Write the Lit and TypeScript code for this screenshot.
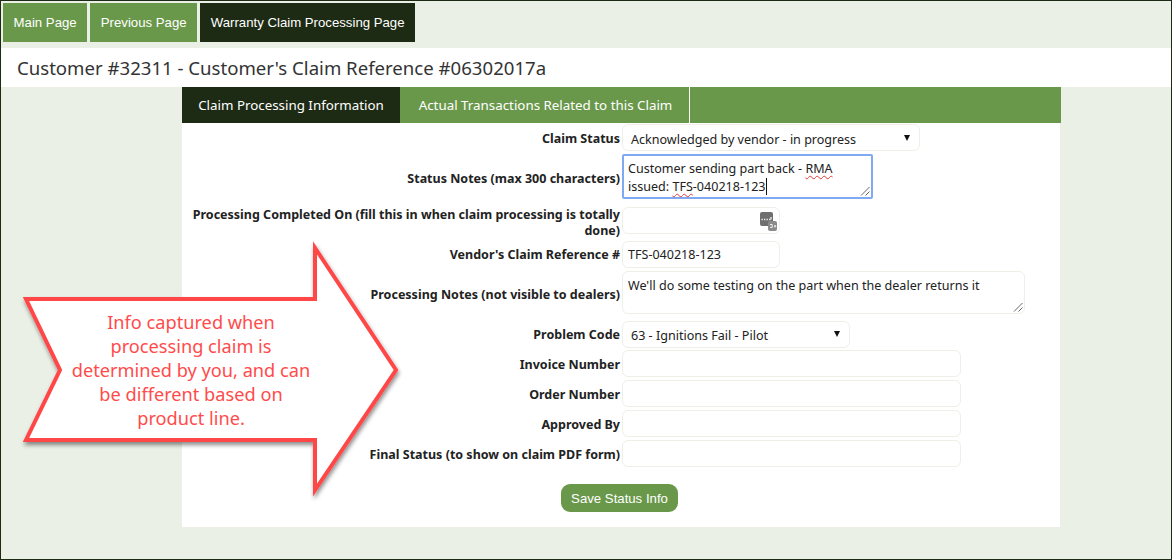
import { LitElement, html, css, svg } from "lit";
import { customElement } from "lit/decorators.js";

@customElement("app-root")
export class AppRoot extends LitElement {
  static styles = css`
    :host { display: block; width: 1172px; height: 560px; box-sizing: border-box; background: #eaf0e6; border: 1px solid #1e2b14; position: relative; overflow: hidden; font-family: "Noto Sans", "DejaVu Sans", sans-serif; color: #222; }
    .nav { display: flex; gap: 3px; padding: 2px 0 0 2px; height: 47px; box-sizing: border-box; }
    .nav a { display: flex; align-items: center; height: 39px; padding: 0 10.6px; background: #6a984b; color: #fff; font: 13.2px "Liberation Sans", Arial, sans-serif; }
    .nav a.on { background: #1e2b14; }
    .title { background: #fff; height: 39px; padding-left: 16px; display: flex; align-items: center; font-size: 18.6px; color: #333; }
    .panel { width: 879px; margin-left: 181px; }
    .tabs { display: flex; height: 36px; background: #6a984b; }
    .tabs div { display: flex; align-items: center; justify-content: center; font-size: 13.35px; color: #fff; border-right: 1px solid #fff; box-sizing: border-box; }
    .tabs .a { width: 218px; background: #1e2b14; margin-right: 2px; border: 0; }
    .tabs .b { width: 288px; }
    .body { width: 878px; height: 404px; background: #fff; padding-top: 1px; box-sizing: border-box; }
    .row { display: grid; grid-template-columns: 440px auto; justify-content: start; }
    .label { text-align: right; align-self: center; padding: 0 2px 0 0; font-size: 12.5px; font-weight: 700; line-height: 16px; color: #222; }
    .field { box-sizing: border-box; border: 1px solid #eef0e8; border-radius: 6px; background: #fff; font-size: 12.55px; color: #222; display: flex; position: relative; }
    .select { align-items: center; padding-left: 8px; justify-content: space-between; padding-right: 6px; padding-top: 2px; }
    .tri { width: 0; height: 0; border-left: 3.5px solid transparent; border-right: 3.5px solid transparent; border-top: 6px solid #111; margin: 0 3px 3px 0; }
    .input { align-items: center; padding-left: 5px; }
    .area { padding: 5px 5px; line-height: 18px; display: block; white-space: pre-wrap; }
    .focus { border: 2px solid #7fa9f3; border-radius: 2px; padding: 4px 4px; }
    .grip { position: absolute; right: 1px; bottom: 1px; width: 10px; height: 10px; }
    .cal { position: absolute; right: 2px; top: 4px; width: 17px; height: 19px; }
    .sq { text-decoration: underline wavy #e03a3a 1px; text-underline-offset: 2px; text-decoration-skip-ink: none; }
    .caret { display: inline-block; width: 1px; height: 17px; background: #111; vertical-align: -4px; }
    .w299 { width: 298px; height: 27px; padding-top: 4px; }
    .w252 { width: 251px; height: 45px; }
    .w158 { width: 158px; height: 27px; }
    .w403 { width: 403px; height: 43px; }
    .w228 { width: 228px; height: 27px; }
    .w339 { width: 339px; height: 27px; }
    .save { display: flex; margin: 17px 0 0 379px; width: 117px; height: 28px; align-items: center; justify-content: center; border-radius: 9px; background: #6a984b; color: #fff; font: 13.2px "Liberation Sans", Arial, sans-serif; }
    .arrow { position: absolute; left: 0; top: 0; pointer-events: none; }
    .callout { position: absolute; left: 50px; top: 309px; width: 280px; text-align: center; font-size: 18.2px; line-height: 24px; color: #ff4b4b; }
  `;

  private grip() {
    return html`<svg class="grip" viewBox="0 0 10 10"><path d="M1 9.5 9.5 1M5.5 9.5 9.5 5.5" stroke="#666" stroke-width="1" fill="none"/></svg>`;
  }

  private row(label: unknown, control: unknown, gap: number, labelPad = 0) {
    return html`<div class="row" style="margin-top:${gap}px"><div class="label" style="padding-top:${labelPad}px">${label}</div>${control}</div>`;
  }

  render() {
    return html`
      <nav class="nav"><a>Main Page</a><a>Previous Page</a><a class="on">Warranty Claim Processing Page</a></nav>
      <div class="title">Customer #32311 - Customer's Claim Reference #06302017a</div>
      <div class="panel">
        <div class="tabs"><div class="a">Claim Processing Information</div><div class="b">Actual Transactions Related to this Claim</div></div>
        <div class="body">
          ${this.row("Claim Status", html`<div class="field select w299">Acknowledged by vendor - in progress<span class="tri"></span></div>`, 0, 2)}
          ${this.row("Status Notes (max 300 characters)", html`<div class="field area focus w252">Customer sending part back - <span class="sq">RMA</span>
issued: <span class="sq">TFS</span>-040218-123<span class="caret"></span>${this.grip()}</div>`, 3, 4)}
          ${this.row("Processing Completed On (fill this in when claim processing is totally done)", html`<div class="field w158"><svg class="cal" viewBox="0 0 17 19">
            ${svg`<rect x="0" y="0" width="13" height="14" rx="2" fill="#6f6f6f"/><rect x="8" y="9" width="9" height="10" rx="2" fill="#8a8a8a"/>
            <path d="M1.5 7.5h1.4M4 7.5h1.4M6.5 7.5h1.4M9 7.5h1.4M11 5v2.5" stroke="#e8e8e8" stroke-width="1.3"/><path d="M10 12.5h2.2v3h-2M14 14.2h2.2M15.1 13v2.4" stroke="#eee" stroke-width="1" fill="none"/>`}
          </svg></div>`, 8)}
          ${this.row("Vendor's Claim Reference #", html`<div class="field input w158">TFS-040218-123</div>`, 2)}
          ${this.row("Processing Notes (not visible to dealers)", html`<div class="field area w403">We'll do some testing on the part when the dealer returns it${this.grip()}</div>`, 3, 4)}
          ${this.row("Problem Code", html`<div class="field select w228">63 - Ignitions Fail - Pilot<span class="tri"></span></div>`, 7)}
          ${this.row("Invoice Number", html`<div class="field w339"></div>`, 2, 2)}
          ${this.row("Order Number", html`<div class="field w339"></div>`, 3, 2)}
          ${this.row("Approved By", html`<div class="field w339"></div>`, 3, 2)}
          ${this.row("Final Status (to show on claim PDF form)", html`<div class="field w339"></div>`, 3, 2)}
          <div class="save">Save Status Info</div>
        </div>
      </div>
      <svg class="arrow" width="1172" height="560" viewBox="0 0 1172 560">
        <defs><filter id="s" x="-10%" y="-10%" width="125%" height="125%"><feDropShadow dx="1" dy="3" stdDeviation="2" flood-color="#000" flood-opacity=".45"/></filter></defs>
        <polygon transform="translate(-1,-1)" points="26,299 315,299 315,248 396,370 315,490 315,440 26,440 60,370" fill="#fff" stroke="#ff4747" stroke-width="4" stroke-linejoin="miter" filter="url(#s)"/>
      </svg>
      <div class="callout">Info captured when<br>processing claim is<br>determined by you, and can<br>be different based on<br>product line.</div>
    `;
  }
}
